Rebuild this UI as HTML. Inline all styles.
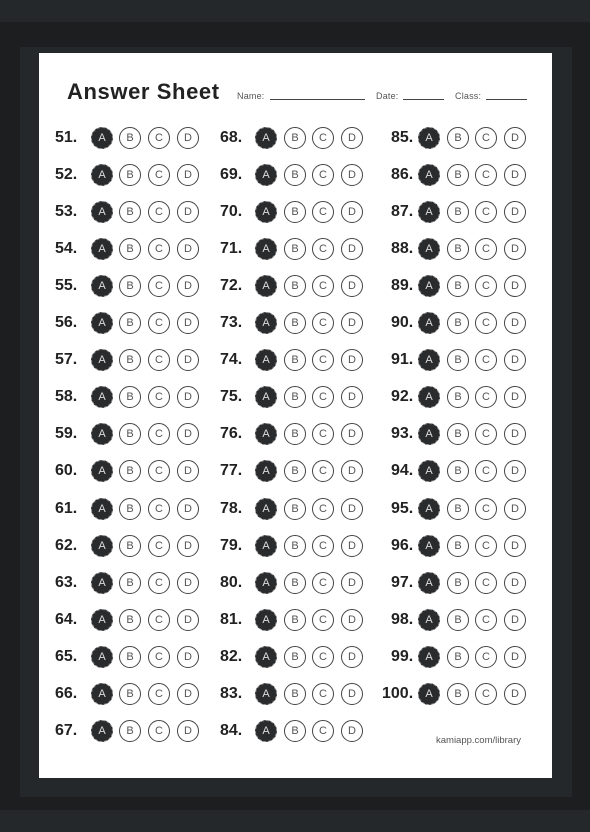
<!DOCTYPE html>
<html><head><meta charset="utf-8"><style>
*{margin:0;padding:0;box-sizing:border-box}
html,body{width:590px;height:832px;overflow:hidden;background:#25282b;font-family:"Liberation Sans",Arial,sans-serif}
.tex{position:absolute;left:0;top:22px;width:590px;height:788px;background:#1d1e20}
.fr{position:absolute;left:20px;top:47px;width:552px;height:750px;background:#25282b}
.pp{position:absolute;left:39px;top:53px;width:513px;height:725px;background:#fff}
h1{position:absolute;left:67px;top:79px;font-size:22px;font-weight:bold;color:#222;letter-spacing:0.6px}
.hd{position:absolute;top:91px;font-size:9px;color:#555;letter-spacing:0.2px}
.ln{position:absolute;top:99px;height:1px;background:#444}
.r{position:absolute;height:22px;width:200px}
.r b{position:absolute;top:2px;font-size:16px;font-weight:bold;color:#222}
.r i{position:absolute;top:0;width:22px;height:22px;border:1px solid #444;border-radius:50%;font-style:normal;font-size:11px;line-height:20px;text-align:center;color:#555}
.r i.f{background:#2a2b2d;color:#ddd;border:1px dashed #888}
.c1{left:55px}.c2{left:220px}.c3{left:391px}
.c1 i:nth-of-type(1){left:36px}.c1 i:nth-of-type(2){left:64px}.c1 i:nth-of-type(3){left:93px}.c1 i:nth-of-type(4){left:122px}
.c2 i:nth-of-type(1){left:35px}.c2 i:nth-of-type(2){left:64px}.c2 i:nth-of-type(3){left:92px}.c2 i:nth-of-type(4){left:121px}
.c3 i:nth-of-type(1){left:27px}.c3 i:nth-of-type(2){left:56px}.c3 i:nth-of-type(3){left:84px}.c3 i:nth-of-type(4){left:113px}
.c3 b.w{left:-9px}
.ft{position:absolute;left:436px;top:735px;font-size:9.5px;color:#555}
</style></head><body>
<div class="tex"></div><div class="fr"></div><div class="pp"></div>
<h1>Answer Sheet</h1>
<div class="hd" style="left:237px">Name:</div><div class="ln" style="left:270px;width:95px"></div>
<div class="hd" style="left:376px">Date:</div><div class="ln" style="left:403px;width:41px"></div>
<div class="hd" style="left:455px">Class:</div><div class="ln" style="left:486px;width:41px"></div>

<div class="r c1" style="top:127px"><b>51.</b><i class="f">A</i><i>B</i><i>C</i><i>D</i></div>
<div class="r c1" style="top:164px"><b>52.</b><i class="f">A</i><i>B</i><i>C</i><i>D</i></div>
<div class="r c1" style="top:201px"><b>53.</b><i class="f">A</i><i>B</i><i>C</i><i>D</i></div>
<div class="r c1" style="top:238px"><b>54.</b><i class="f">A</i><i>B</i><i>C</i><i>D</i></div>
<div class="r c1" style="top:275px"><b>55.</b><i class="f">A</i><i>B</i><i>C</i><i>D</i></div>
<div class="r c1" style="top:312px"><b>56.</b><i class="f">A</i><i>B</i><i>C</i><i>D</i></div>
<div class="r c1" style="top:349px"><b>57.</b><i class="f">A</i><i>B</i><i>C</i><i>D</i></div>
<div class="r c1" style="top:386px"><b>58.</b><i class="f">A</i><i>B</i><i>C</i><i>D</i></div>
<div class="r c1" style="top:423px"><b>59.</b><i class="f">A</i><i>B</i><i>C</i><i>D</i></div>
<div class="r c1" style="top:460px"><b>60.</b><i class="f">A</i><i>B</i><i>C</i><i>D</i></div>
<div class="r c1" style="top:498px"><b>61.</b><i class="f">A</i><i>B</i><i>C</i><i>D</i></div>
<div class="r c1" style="top:535px"><b>62.</b><i class="f">A</i><i>B</i><i>C</i><i>D</i></div>
<div class="r c1" style="top:572px"><b>63.</b><i class="f">A</i><i>B</i><i>C</i><i>D</i></div>
<div class="r c1" style="top:609px"><b>64.</b><i class="f">A</i><i>B</i><i>C</i><i>D</i></div>
<div class="r c1" style="top:646px"><b>65.</b><i class="f">A</i><i>B</i><i>C</i><i>D</i></div>
<div class="r c1" style="top:683px"><b>66.</b><i class="f">A</i><i>B</i><i>C</i><i>D</i></div>
<div class="r c1" style="top:720px"><b>67.</b><i class="f">A</i><i>B</i><i>C</i><i>D</i></div>

<div class="r c2" style="top:127px"><b>68.</b><i class="f">A</i><i>B</i><i>C</i><i>D</i></div>
<div class="r c2" style="top:164px"><b>69.</b><i class="f">A</i><i>B</i><i>C</i><i>D</i></div>
<div class="r c2" style="top:201px"><b>70.</b><i class="f">A</i><i>B</i><i>C</i><i>D</i></div>
<div class="r c2" style="top:238px"><b>71.</b><i class="f">A</i><i>B</i><i>C</i><i>D</i></div>
<div class="r c2" style="top:275px"><b>72.</b><i class="f">A</i><i>B</i><i>C</i><i>D</i></div>
<div class="r c2" style="top:312px"><b>73.</b><i class="f">A</i><i>B</i><i>C</i><i>D</i></div>
<div class="r c2" style="top:349px"><b>74.</b><i class="f">A</i><i>B</i><i>C</i><i>D</i></div>
<div class="r c2" style="top:386px"><b>75.</b><i class="f">A</i><i>B</i><i>C</i><i>D</i></div>
<div class="r c2" style="top:423px"><b>76.</b><i class="f">A</i><i>B</i><i>C</i><i>D</i></div>
<div class="r c2" style="top:460px"><b>77.</b><i class="f">A</i><i>B</i><i>C</i><i>D</i></div>
<div class="r c2" style="top:498px"><b>78.</b><i class="f">A</i><i>B</i><i>C</i><i>D</i></div>
<div class="r c2" style="top:535px"><b>79.</b><i class="f">A</i><i>B</i><i>C</i><i>D</i></div>
<div class="r c2" style="top:572px"><b>80.</b><i class="f">A</i><i>B</i><i>C</i><i>D</i></div>
<div class="r c2" style="top:609px"><b>81.</b><i class="f">A</i><i>B</i><i>C</i><i>D</i></div>
<div class="r c2" style="top:646px"><b>82.</b><i class="f">A</i><i>B</i><i>C</i><i>D</i></div>
<div class="r c2" style="top:683px"><b>83.</b><i class="f">A</i><i>B</i><i>C</i><i>D</i></div>
<div class="r c2" style="top:720px"><b>84.</b><i class="f">A</i><i>B</i><i>C</i><i>D</i></div>

<div class="r c3" style="top:127px"><b>85.</b><i class="f">A</i><i>B</i><i>C</i><i>D</i></div>
<div class="r c3" style="top:164px"><b>86.</b><i class="f">A</i><i>B</i><i>C</i><i>D</i></div>
<div class="r c3" style="top:201px"><b>87.</b><i class="f">A</i><i>B</i><i>C</i><i>D</i></div>
<div class="r c3" style="top:238px"><b>88.</b><i class="f">A</i><i>B</i><i>C</i><i>D</i></div>
<div class="r c3" style="top:275px"><b>89.</b><i class="f">A</i><i>B</i><i>C</i><i>D</i></div>
<div class="r c3" style="top:312px"><b>90.</b><i class="f">A</i><i>B</i><i>C</i><i>D</i></div>
<div class="r c3" style="top:349px"><b>91.</b><i class="f">A</i><i>B</i><i>C</i><i>D</i></div>
<div class="r c3" style="top:386px"><b>92.</b><i class="f">A</i><i>B</i><i>C</i><i>D</i></div>
<div class="r c3" style="top:423px"><b>93.</b><i class="f">A</i><i>B</i><i>C</i><i>D</i></div>
<div class="r c3" style="top:460px"><b>94.</b><i class="f">A</i><i>B</i><i>C</i><i>D</i></div>
<div class="r c3" style="top:498px"><b>95.</b><i class="f">A</i><i>B</i><i>C</i><i>D</i></div>
<div class="r c3" style="top:535px"><b>96.</b><i class="f">A</i><i>B</i><i>C</i><i>D</i></div>
<div class="r c3" style="top:572px"><b>97.</b><i class="f">A</i><i>B</i><i>C</i><i>D</i></div>
<div class="r c3" style="top:609px"><b>98.</b><i class="f">A</i><i>B</i><i>C</i><i>D</i></div>
<div class="r c3" style="top:646px"><b>99.</b><i class="f">A</i><i>B</i><i>C</i><i>D</i></div>
<div class="r c3" style="top:683px"><b class="w">100.</b><i class="f">A</i><i>B</i><i>C</i><i>D</i></div>

<div class="ft">kamiapp.com/library</div>
</body></html>
